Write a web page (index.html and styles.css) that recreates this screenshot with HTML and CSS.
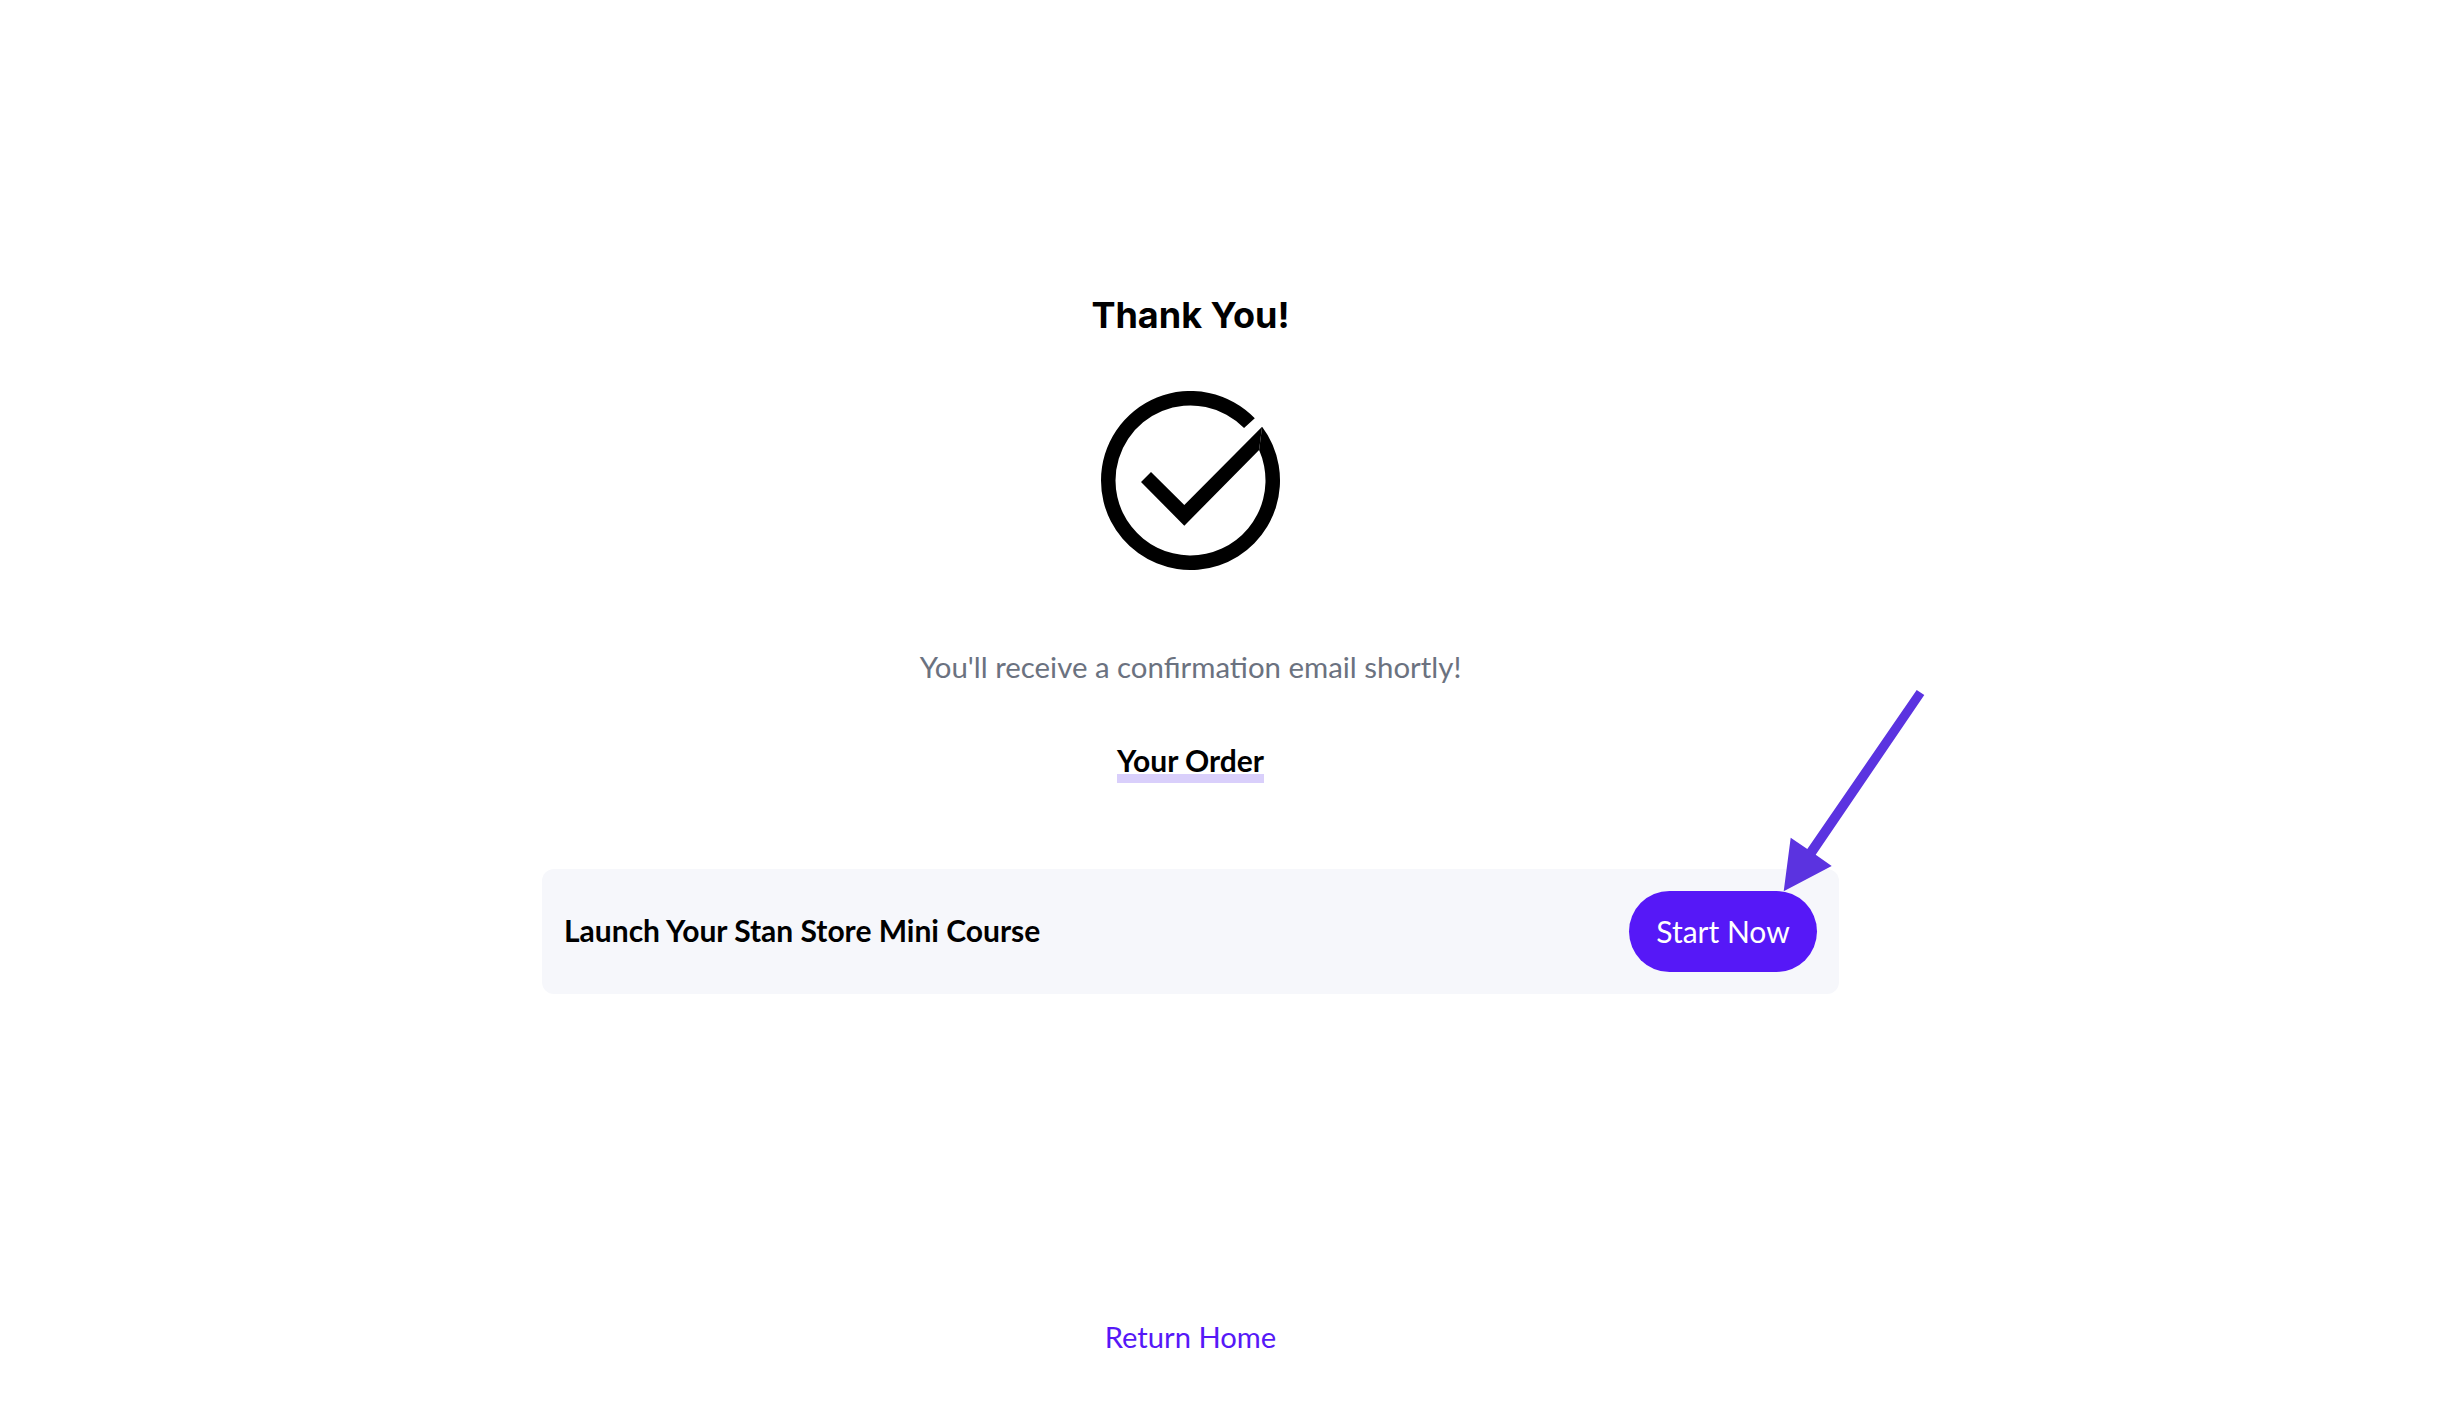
FILE: index.html
```html
<!DOCTYPE html>
<html lang="en">

<head>
    <meta charset="UTF-8">
    <meta name="viewport" content="width=device-width, initial-scale=1.0">
    <title>Thank You!</title>
    <link rel="stylesheet" href="styles.css">
</head>

<body>
    <main class="page">
        <h1 class="title">Thank You!</h1>
        <svg class="check" viewBox="0 0 179 179" aria-hidden="true">
            <path d="M161.1 35.8A89.5 89.5 0 1 1 0 89.5A89.5 89.5 0 0 1 153.8 27.2L143.05 37A75 75 0 0 0 14.5 89.5A75 75 0 1 0 158.1 59.1Z"/>
            <path d="M40 91L50 81L83.3 114L161.1 35.8L158.1 59.1L83.3 134.7Z"/>
        </svg>
        <p class="note">You'll receive a confirmation email shortly!</p>
        <h2 class="order-title">Your Order</h2>
        <div class="order-card">
            <span class="order-name">Launch Your Stan Store Mini Course</span>
            <a class="start-btn" href="javascript:;">Start Now</a>
            <svg class="arrow" viewBox="0 0 142 203" aria-hidden="true">
                <path d="M133.7 1L141.3 6L32.7 165.7L48.7 177L.7 202.3L7.7 148.7L24.3 160Z"/>
            </svg>
        </div>
        <a class="return-link" href="javascript:;">Return Home</a>
    </main>
</body>

</html>
```

FILE: styles.css
```css
body {
    margin: 0;
    background-color: #fff;
    font-family: "Lato", "Open Sans", sans-serif;
}

h1,
h2,
p {
    margin: 0;
}

a {
    text-decoration: none;
}

.page {
    display: flex;
    flex-direction: column;
    align-items: center;
    width: 2381px;
    height: 1402px;
    padding-top: 290px;
    box-sizing: border-box;
    overflow: hidden;
}

.title {
    font-family: "Inter", sans-serif;
    font-size: 36px;
    font-weight: 700;
    line-height: 50px;
    color: #000;
}

.check {
    width: 179px;
    height: 179px;
    margin-top: 51px;
    fill: #000;
}

.note {
    margin-top: 77px;
    font-size: 29.4px;
    line-height: 40px;
    color: #6b7280;
}

.order-title {
    margin-top: 60px;
    border-bottom: 9px solid #d9cffb;
    font-size: 30px;
    font-weight: 700;
    line-height: 27px;
    color: #000;
}

.order-card {
    position: relative;
    display: flex;
    align-items: center;
    justify-content: space-between;
    width: 1297px;
    height: 125px;
    margin-top: 86px;
    padding: 0 22px 0 22px;
    box-sizing: border-box;
    background-color: #f6f7fb;
    border-radius: 12px;
}

.order-name {
    padding-bottom: 3px;
    font-size: 30px;
    font-weight: 700;
    color: #000;
}

.start-btn {
    display: flex;
    align-items: center;
    justify-content: center;
    width: 188px;
    height: 81px;
    padding-bottom: 2px;
    box-sizing: border-box;
    background-color: #5618f7;
    border-radius: 41px;
    font-size: 30px;
    color: #fff;
}

.arrow {
    position: absolute;
    top: -180px;
    right: -86px;
    width: 142px;
    height: 203px;
    fill: #5b33e0;
}

.return-link {
    margin-top: 323px;
    font-size: 29.2px;
    line-height: 40px;
    color: #5618f7;
}
```
